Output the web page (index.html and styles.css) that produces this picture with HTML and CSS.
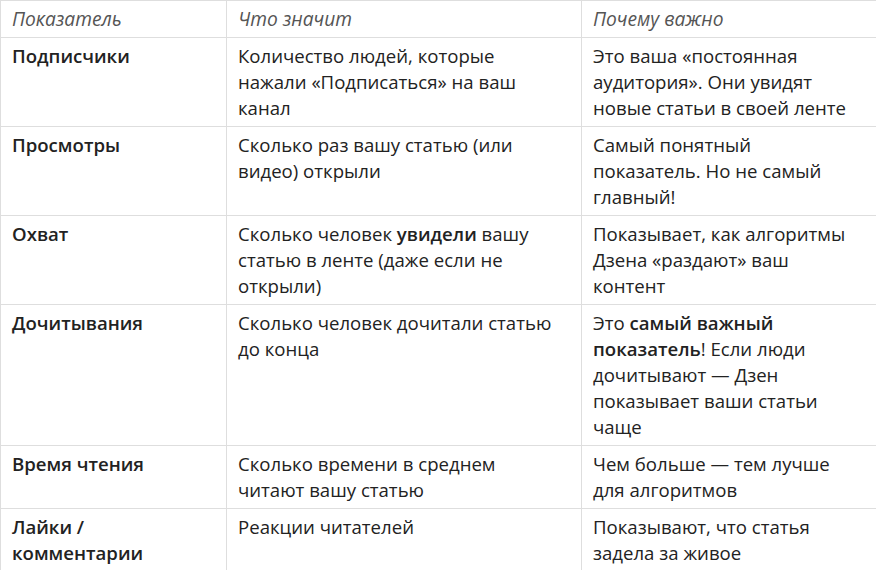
FILE: index.html
```html
<!DOCTYPE html>
<html lang="ru">
<head>
<meta charset="utf-8">
<link rel="stylesheet" href="styles.css">
</head>
<body>
<table class="metrics">
  <colgroup>
    <col class="c1">
    <col class="c2">
    <col class="c3">
  </colgroup>
  <thead>
    <tr>
      <th>Показатель</th>
      <th>Что значит</th>
      <th>Почему важно</th>
    </tr>
  </thead>
  <tbody>
    <tr>
      <td><strong>Подписчики</strong></td>
      <td>Количество людей, которые<br>нажали «Подписаться» на ваш<br>канал</td>
      <td>Это ваша «постоянная<br>аудитория». Они увидят<br>новые статьи в своей ленте</td>
    </tr>
    <tr>
      <td><strong>Просмотры</strong></td>
      <td>Сколько раз вашу статью (или<br>видео) открыли</td>
      <td>Самый понятный<br>показатель. Но не самый<br>главный!</td>
    </tr>
    <tr>
      <td><strong>Охват</strong></td>
      <td>Сколько человек <strong>увидели</strong> вашу<br>статью в ленте (даже если не<br>открыли)</td>
      <td>Показывает, как алгоритмы<br>Дзена «раздают» ваш<br>контент</td>
    </tr>
    <tr>
      <td><strong>Дочитывания</strong></td>
      <td>Сколько человек дочитали статью<br>до конца</td>
      <td>Это <strong>самый важный<br>показатель</strong>! Если люди<br>дочитывают — Дзен<br>показывает ваши статьи<br>чаще</td>
    </tr>
    <tr>
      <td><strong>Время чтения</strong></td>
      <td>Сколько времени в среднем<br>читают вашу статью</td>
      <td>Чем больше — тем лучше<br>для алгоритмов</td>
    </tr>
    <tr>
      <td><strong>Лайки /<br>комментарии</strong></td>
      <td>Реакции читателей</td>
      <td>Показывают, что статья<br>задела за живое</td>
    </tr>
  </tbody>
</table>
</body>
</html>
```
FILE: styles.css
```css
html, body {
  margin: 0;
  padding: 0;
  background: #fff;
}
body {
  font-family: "Open Sans", "Noto Sans", sans-serif;
  font-size: 18.6px;
  line-height: 26px;
  color: #222;
}
.metrics {
  border-collapse: collapse;
  table-layout: fixed;
  width: 876px;
}
.c1 { width: 226px; }
.c2 { width: 355px; }
.c3 { width: 295px; }
.metrics th,
.metrics td {
  border: 1px solid #dedede;
  padding: 5px 11px;
  text-align: left;
  vertical-align: top;
  white-space: nowrap;
}
.metrics th {
  font-style: italic;
  font-weight: normal;
  font-size: 19.2px;
  color: #555;
}
.metrics strong {
  font-weight: 600;
}
```
